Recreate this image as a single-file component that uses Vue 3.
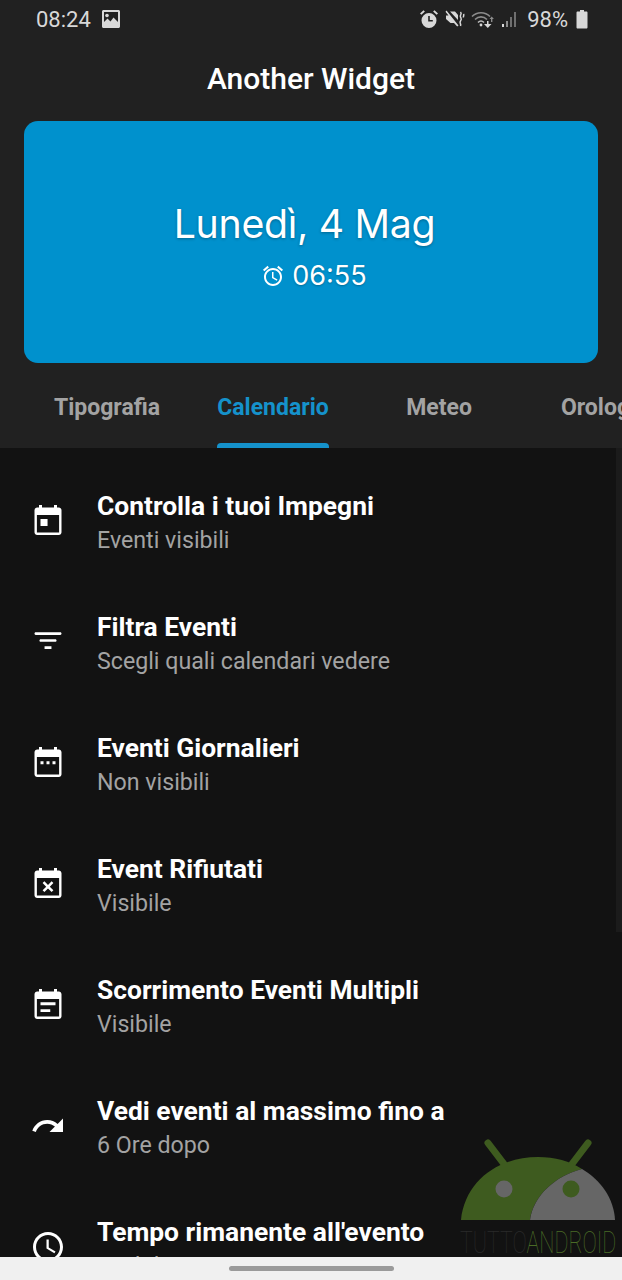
<script setup>
const tabs = ['Tipografia', 'Calendario', 'Meteo', 'Orologio']

const base = 'M6 1.4h2V3h8V1.4h2V3h1.2c1 0 1.8.8 1.8 1.8v14.7c0 1-.8 1.8-1.8 1.8H4.800c-1 0-1.800-.8-1.800-1.800V4.800C3 3.800 3.800 3 4.800 3H6zM4.600 8v11.700h14.800V8z'

const rows = [
  { title: 'Controlla i tuoi Impegni', sub: 'Eventi visibili', icon: base + 'M7 10.700h4.700v4.700H7z' },
  { title: 'Filtra Eventi', sub: 'Scegli quali calendari vedere', icon: 'M3 6.400c0-.5.3-.9.8-.9h16.400c.5 0 .8.4.8.9s-.3.9-.8.9H3.800C3.300 7.300 3 6.900 3 6.400zM6.300 11c0-.5.3-.9.8-.9h9.800c.5 0 .8.4.8.9s-.3.9-.8.9H7.100c-.5 0-.8-.4-.8-.9zM9.700 14.800h4.600v1.800H9.700z' },
  { title: 'Eventi Giornalieri', sub: 'Non visibili', icon: base + 'M7 10.900h2v2H7zM11 10.900h2v2h-2zM15 10.900h2v2h-2z' },
  { title: 'Event Rifiutati', sub: 'Visibile', icon: base + 'M9.600 10.200L12 12.600l2.400-2.400 1.200 1.200-2.400 2.400 2.400 2.400-1.200 1.200-2.400-2.400-2.400 2.400-1.200-1.200 2.400-2.400-2.400-2.400z' },
  { title: 'Scorrimento Eventi Multipli', sub: 'Visibile', icon: base + 'M7 10.200h10v1.900H7zM7 14.800h6.500v1.900H7z' },
  { title: 'Vedi eventi al massimo fino a', sub: '6 Ore dopo', icon: 'M18.400 10.600C16.550 8.990 14.150 8 11.500 8c-4.650 0-8.580 3.030-9.960 7.220L3.900 16c1.050-3.190 4.050-5.500 7.600-5.500 1.950 0 3.730.72 5.120 1.880L13 16h9V7l-3.600 3.600z' },
  { title: "Tempo rimanente all'evento", sub: 'Visibile', icon: 'M11.990 2C6.470 2 2 6.480 2 12s4.470 10 9.990 10C17.520 22 22 17.520 22 12S17.520 2 11.990 2zM12 20c-4.420 0-8-3.580-8-8s3.580-8 8-8 8 3.580 8 8-3.580 8-8 8zm.5-13H11v6l5.250 3.150.75-1.230-4.500-2.670z' }
]
</script>

<template>
  <div class="phone">
    <div class="top">
      <div class="status">
        <div class="status-left">
          <span>08:24</span>
          <svg class="pic" viewBox="0 0 20 20">
            <path fill="#d8d8d8" fill-rule="evenodd" d="M1 2.500C1 1.700 1.700 1 2.500 1h15c.8 0 1.500.7 1.500 1.500v15c0 .8-.7 1.500-1.500 1.500h-15C1.700 19 1 18.300 1 17.500zM3 3v10l3.500-3.500 3 3 3-4L17 13V3z" />
            <circle cx="6" cy="6.500" r="1.800" fill="#d8d8d8" />
          </svg>
        </div>
        <div class="status-right">
          <svg class="st" viewBox="0 0 20 20">
            <path fill="#d8d8d8" fill-rule="evenodd" d="M10 4a7.500 7.500 0 1 1 0 15 7.500 7.500 0 0 1 0-15zM9.200 7v5.500h4.600v-1.500h-3V7z" />
            <path fill="#d8d8d8" d="M1 4.500L4.500 1.200l1.400 1.300-3.500 3.300zM19 4.500l-3.500-3.300-1.400 1.300 3.500 3.300z" />
          </svg>
          <svg class="st" viewBox="0 0 20 20">
            <path fill="#d8d8d8" d="M1.500 1.500l12 15-1.300 1L9 14H5.500L1 10V6.500h2.500L.5 2.700zM5 2.500h5l3 3.500v5z" />
            <path fill="none" stroke="#d8d8d8" stroke-width="1.500" d="M15.500 3c2 2-1 3 0 5s1.500 2 0 4 1 3 0 5M18.500 5c1 1.500-.5 2 0 3.500" />
          </svg>
          <svg class="st wifi" viewBox="0 0 24 20">
            <path fill="none" stroke="#8c8c8c" stroke-width="1.600" d="M1 7.500c5-5 13-5 18 0M4 10.500c3.500-3.500 8.500-3.500 12 0" />
            <path fill="none" stroke="#bdbdbd" stroke-width="1.600" d="M7 13.500c2-2 4-2 6 0" />
            <circle cx="10" cy="16" r="1.400" fill="#d8d8d8" />
            <path fill="#d8d8d8" d="M13 15h3v-3h1.500v3h3l-3.700 4z" />
            <path fill="#8c8c8c" d="M20 13v-3h-1.500l2.200-2.500 2.200 2.500h-1.500v3z" />
          </svg>
          <svg class="st signal" viewBox="0 0 18 20">
            <rect x="1" y="15" width="2" height="3" fill="#d8d8d8" />
            <rect x="5" y="12" width="2" height="6" fill="#8c8c8c" />
            <rect x="9" y="8" width="2" height="10" fill="#6f6f6f" />
            <rect x="13" y="3" width="2" height="15" fill="#6f6f6f" />
          </svg>
          <span class="pct">98%</span>
          <svg class="batt" viewBox="0 0 12 20">
            <path fill="#d8d8d8" d="M4 1h4v1.500h2.500c.5 0 1 .5 1 1V18.500c0 .5-.5 1-1 1h-9c-.5 0-1-.5-1-1V3.500c0-.5.5-1 1-1H4z" />
          </svg>
        </div>
      </div>
      <h1 class="app-title">Another Widget</h1>
      <div class="card">
        <div class="date">Lunedì, 4 Mag</div>
        <div class="alarm">
          <svg class="alarm-ico" viewBox="0 0 24 24">
            <path fill="#fff" d="M22 5.720l-4.600-3.860-1.290 1.530 4.600 3.860L22 5.720zM7.880 3.390L6.600 1.860 2 5.710l1.290 1.530 4.590-3.850zM12.500 8H11v6l4.750 2.850.75-1.230-4-2.370V8zM12 4c-4.970 0-9 4.030-9 9s4.030 9 9 9 9-4.030 9-9-4.030-9-9-9zm0 16c-3.870 0-7-3.130-7-7s3.130-7 7-7 7 3.130 7 7-3.130 7-7 7z" />
          </svg>
          <span>06:55</span>
        </div>
      </div>
      <div class="tabs">
        <div v-for="(tab, index) in tabs" :key="index" class="tab" :class="{ active: index === 1 }">
          <div class="tab-label">
            <span class="tab-text">{{ tab }}</span>
            <div class="tab-bar"></div>
          </div>
        </div>
      </div>
    </div>
    <div class="list">
      <div v-for="(row, index) in rows" :key="index" class="row">
        <svg class="row-ico" viewBox="0 0 24 24"><path fill="#fff" fill-rule="evenodd" :d="row.icon" /></svg>
        <div class="row-text">
          <div class="row-title">{{ row.title }}</div>
          <div class="row-sub">{{ row.sub }}</div>
        </div>
      </div>
    </div>
    <div class="scroll"></div>
    <div class="mark">
      <svg class="mark-logo" viewBox="0 0 156 90">
        <path d="M28 7L44 28" stroke="#3e5b1f" stroke-width="7" stroke-linecap="round" fill="none" />
        <path d="M128 7L112 28" stroke="#3e5b1f" stroke-width="7" stroke-linecap="round" fill="none" />
        <path fill="#3e5b1f" d="M1 84C5 45 38 21 78 21c17 0 32 4 44 12C95 40 73 60 70 84z" />
        <path fill="#666666" d="M122 33c19 11 32 30 33 51H70c3-24 25-44 52-51z" />
        <circle cx="44" cy="53" r="8.500" fill="#666666" />
        <circle cx="111" cy="53" r="8.500" fill="#3e5b1f" />
      </svg>
      <div class="mark-text"><span class="mark-a">TUTTO</span><span class="mark-b">ANDROID</span></div>
    </div>
    <div class="nav"><div class="pill"></div></div>
  </div>
</template>

<style>
html, body {
  margin: 0;
  background: #121212;
}
</style>

<style scoped>
.phone {
  position: relative;
  width: 622px;
  height: 1280px;
  overflow: hidden;
  display: flex;
  flex-direction: column;
  background: #121212;
  font-family: Roboto, sans-serif;
}
.top {
  height: 448px;
  flex-shrink: 0;
  background: #212121;
  display: flex;
  flex-direction: column;
}
.status {
  height: 38px;
  padding: 0 34px 0 36px;
  display: flex;
  align-items: center;
  justify-content: space-between;
  color: #d8d8d8;
  font-size: 22px;
}
.status-left, .status-right {
  display: flex;
  align-items: center;
}
.pic {
  width: 20px;
  height: 20px;
  margin-left: 10px;
}
.st {
  width: 20px;
  height: 20px;
  margin-right: 6px;
}
.wifi {
  width: 24px;
  margin-right: 6px;
}
.signal {
  width: 18px;
  margin-right: 8px;
}
.batt {
  width: 12px;
  height: 20px;
  margin-left: 8px;
}
.app-title {
  margin: 0;
  height: 83px;
  line-height: 82px;
  text-align: center;
  color: #fff;
  font-size: 30px;
  font-weight: 500;
}
.card {
  height: 242px;
  margin: 0 24px;
  border-radius: 14px;
  background: #0091cd;
  color: #fff;
  display: flex;
  flex-direction: column;
  align-items: center;
  justify-content: center;
  flex-shrink: 0;
}
.date {
  font-family: Inter, sans-serif;
  font-size: 39.3px;
  line-height: 50px;
  letter-spacing: -0.3px;
  margin-top: 8px;
  margin-right: 13px;
  text-shadow: 0 1px 3px rgba(0, 0, 0, 0.3);
}
.alarm {
  display: flex;
  align-items: center;
  font-family: Inter, sans-serif;
  font-size: 27px;
  line-height: 34px;
  margin-top: 10px;
  margin-left: 6px;
  text-shadow: 0 1px 2px rgba(0, 0, 0, 0.25);
}
.alarm-ico {
  width: 24px;
  height: 24px;
  margin-right: 7px;
}
.tabs {
  flex: 1;
  display: flex;
  padding-left: 24px;
}
.tab {
  flex: 0 0 166px;
  display: flex;
  justify-content: center;
  color: #a3a3a3;
  font-size: 23px;
  font-weight: 700;
  white-space: nowrap;
}
.tab-label {
  height: 85px;
  display: flex;
  flex-direction: column;
}
.tab-text {
  height: 80px;
  line-height: 90px;
}
.tab-bar {
  height: 5px;
  border-radius: 4px 4px 0 0;
}
.tab.active {
  color: #1592cb;
}
.tab.active .tab-bar {
  background: #1592cb;
}
.list {
  padding-top: 12px;
  flex: 1;
}
.row {
  height: 121px;
  padding-left: 30px;
  display: flex;
  align-items: center;
  box-sizing: border-box;
}
.row-ico {
  width: 36px;
  height: 36px;
  flex-shrink: 0;
}
.row-text {
  margin-left: 31px;
  margin-top: 5px;
}
.row-title {
  color: #fff;
  font-size: 26.4px;
  font-weight: 700;
  line-height: 33px;
}
.row-sub {
  color: #a3a3a3;
  font-size: 23.2px;
  line-height: 34px;
}
.scroll {
  position: absolute;
  right: 0;
  top: 448px;
  width: 6px;
  height: 484px;
  background: #1b1b1b;
}
.mark {
  position: absolute;
  left: 460px;
  top: 1136px;
  width: 156px;
}
.mark-logo {
  display: block;
  width: 156px;
  height: 90px;
}
.mark-text {
  margin-top: 1px;
  font-family: Roboto, sans-serif;
  font-weight: 100;
  font-size: 31px;
  line-height: 32px;
  white-space: nowrap;
  transform: scaleX(0.69);
  transform-origin: left center;
}
.mark-a {
  color: #2a2a2a;
}
.mark-b {
  color: #4a6b26;
}
.nav {
  position: absolute;
  left: 0;
  right: 0;
  bottom: 0;
  height: 23px;
  background: #f0f0f0;
  display: flex;
  justify-content: center;
  align-items: center;
}
.pill {
  width: 165px;
  height: 5px;
  border-radius: 3px;
  background: #9a9a9a;
}
</style>
